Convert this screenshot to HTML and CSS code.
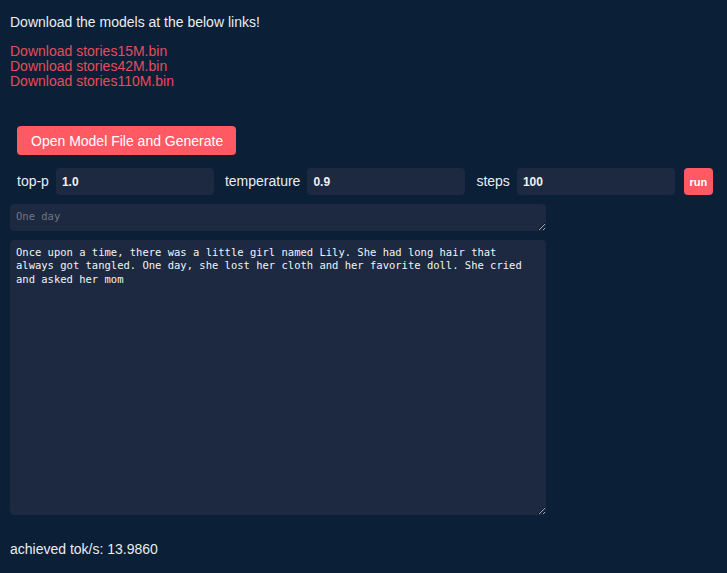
FILE: index.html
```
<!DOCTYPE html>
<html>
<head>
<meta charset="utf-8">
<link rel="stylesheet" href="styles.css">
</head>
<body>
<div class="page">
  <p class="intro">Download the models at the below links!</p>
  <div class="links">
    <a class="dl" href="#">Download stories15M.bin</a>
    <a class="dl" href="#">Download stories42M.bin</a>
    <a class="dl" href="#">Download stories110M.bin</a>
  </div>
  <div class="controls">
    <button class="open-btn">Open Model File and Generate</button>
    <div class="params">
      <label class="param"><span class="param-label">top-p</span><input class="param-input" value="1.0"></label>
      <label class="param"><span class="param-label">temperature</span><input class="param-input" value="0.9"></label>
      <label class="param"><span class="param-label">steps</span><input class="param-input" value="100"></label>
      <button class="run-btn">run</button>
    </div>
  </div>
  <textarea class="prompt" placeholder="One day"></textarea>
  <textarea class="output">Once upon a time, there was a little girl named Lily. She had long hair that always got tangled. One day, she lost her cloth and her favorite doll. She cried and asked her mom</textarea>
  <p class="stats">achieved tok/s: 13.9860</p>
</div>
</body>
</html>
```
FILE: styles.css
```
html, body {
  margin: 0;
  padding: 0;
  background: #0b1f36;
}
body {
  font-family: "Liberation Sans", Arial, sans-serif;
  font-size: 14px;
  color: #e9edf2;
}
.page {
  padding: 14px 10px 0 10px;
  display: flex;
  flex-direction: column;
  align-items: flex-start;
}
.intro {
  margin: 0;
  line-height: 16px;
}
.links {
  margin-top: 14px;
  display: flex;
  flex-direction: column;
}
.dl {
  color: #e44d5d;
  text-decoration: none;
  line-height: 15px;
}
.controls {
  margin-top: 37px;
  padding-left: 7px;
  display: flex;
  flex-direction: column;
  align-items: flex-start;
  gap: 13px;
}
.open-btn {
  background: #ff5a64;
  color: #ffffff;
  border: none;
  border-radius: 4px;
  height: 29px;
  padding: 0 13px 0 14px;
  font-family: "Liberation Sans", Arial, sans-serif;
  font-size: 14px;
}
.params {
  display: flex;
  align-items: center;
  gap: 11px;
}
.param {
  display: flex;
  align-items: center;
  gap: 7px;
}
.param-label {
  font-size: 14px;
  line-height: 16px;
  padding-bottom: 2px;
  color: #e9edf2;
}
.param-input {
  width: 158px;
  height: 27px;
  box-sizing: border-box;
  border: none;
  border-radius: 4px;
  background: #1c2941;
  color: #eef1f5;
  padding: 0 6px;
  font-family: "Liberation Sans", Arial, sans-serif;
  font-size: 12px;
  font-weight: bold;
  outline: none;
}
.run-btn {
  margin-left: -2px;
  width: 29px;
  height: 27px;
  padding: 0;
  background: #ff5a64;
  color: #ffffff;
  border: none;
  border-radius: 4px;
  font-family: "Liberation Sans", Arial, sans-serif;
  font-size: 11px;
  font-weight: bold;
}
.prompt, .output {
  box-sizing: border-box;
  width: 536px;
  border: none;
  border-radius: 4px;
  background: #1c2941;
  color: #f2f4f7;
  font-family: "DejaVu Sans Mono", monospace;
  font-size: 10.5px;
  line-height: 13.3px;
  padding: 6px 6px;
  outline: none;
  margin: 0;
}
.prompt {
  margin-top: 9px;
  height: 27px;
}
.prompt::placeholder {
  color: #717784;
}
.output {
  margin-top: 9px;
  height: 275px;
}
.stats {
  margin: 26px 0 0 0;
  line-height: 16px;
}
```
